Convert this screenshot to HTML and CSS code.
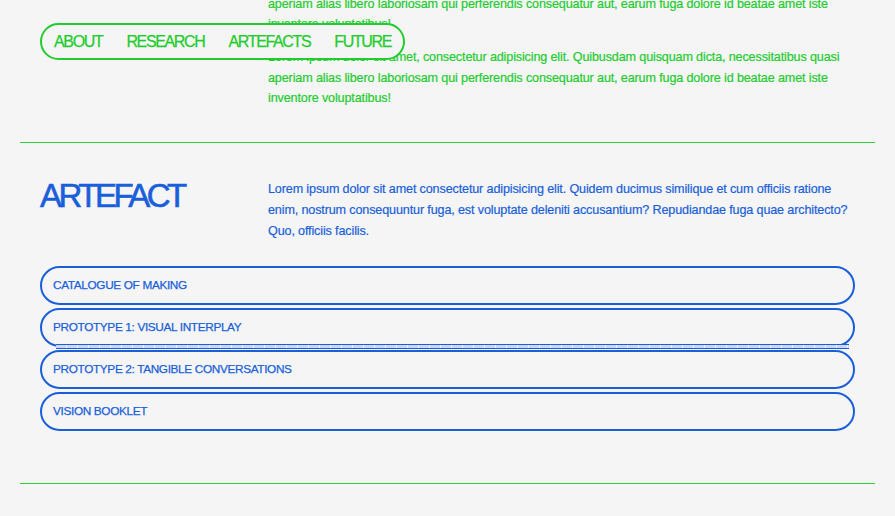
FILE: index.html
```html
<!DOCTYPE html>
<html lang="en">
<head>
<meta charset="utf-8">
<title>Artefact</title>
<link rel="stylesheet" href="styles.css">
</head>
<body>
<nav class="nav">
  <a class="nav-link" href="#about">ABOUT</a>
  <a class="nav-link" href="#research">RESEARCH</a>
  <a class="nav-link" href="#artefacts">ARTEFACTS</a>
  <a class="nav-link" href="#future">FUTURE</a>
</nav>
<main class="page">
  <section class="section section-intro">
    <div class="section-side"></div>
    <div class="section-body">
      <p class="text text-green">Lorem ipsum dolor sit amet, consectetur adipisicing elit. Quibusdam quisquam dicta, necessitatibus quasi aperiam alias libero laboriosam qui perferendis consequatur aut, earum fuga dolore id beatae amet iste inventore voluptatibus!</p>
      <p class="text text-green">Lorem ipsum dolor sit amet, consectetur adipisicing elit. Quibusdam quisquam dicta, necessitatibus quasi aperiam alias libero laboriosam qui perferendis consequatur aut, earum fuga dolore id beatae amet iste inventore voluptatibus!</p>
    </div>
  </section>
  <hr class="rule">
  <section class="section section-artefact" id="artefacts">
    <h2 class="heading">ARTEFACT</h2>
    <div class="section-body">
      <p class="text text-blue">Lorem ipsum dolor sit amet consectetur adipisicing elit. Quidem ducimus similique et cum officiis ratione enim, nostrum consequuntur fuga, est voluptate deleniti accusantium? Repudiandae fuga quae architecto? Quo, officiis facilis.</p>
    </div>
    <ul class="list">
      <li class="list-item">CATALOGUE OF MAKING</li>
      <li class="list-item list-item-seam">PROTOTYPE 1: VISUAL INTERPLAY</li>
      <li class="list-item">PROTOTYPE 2: TANGIBLE CONVERSATIONS</li>
      <li class="list-item">VISION BOOKLET</li>
    </ul>
  </section>
  <hr class="rule">
</main>
</body>
</html>
```
FILE: styles.css
```css
* { box-sizing: border-box; }

html, body {
  margin: 0;
  padding: 0;
  background: #f5f5f5;
  font-family: "Liberation Sans", Arial, sans-serif;
}

.nav {
  position: fixed;
  top: 23px;
  left: 40px;
  z-index: 10;
  display: flex;
  align-items: center;
  gap: 24px;
  height: 37px;
  padding: 0 12px 0 12px;
  border: 2px solid #22cc2e;
  border-radius: 20px;
  background: #f5f5f5;
}

.nav-link {
  color: #22cc2e;
  text-decoration: none;
  font-size: 16px;
  letter-spacing: -1.35px;
  line-height: 1;
  -webkit-text-stroke: 0.25px #22cc2e;
}

.page {
  padding: 0 20px;
}

.section {
  display: grid;
  grid-template-columns: 228px 1fr;
  padding: 0 20px;
}

.section-intro {
  margin-top: -27px;
  padding-bottom: 33px;
}

.section-artefact {
  padding-top: 36px;
  padding-bottom: 52px;
}

.section-body {
  min-width: 0;
}

.text {
  margin: 0 0 12.5px;
  font-size: 12.6px;
  line-height: 20.5px;
  letter-spacing: -0.14px;
  -webkit-text-stroke: 0.2px currentColor;
}

.text:last-child { margin-bottom: 0; }

.text-green { color: #22cc2e; }

.text-blue {
  color: #1a5fd9;
  line-height: 21px;
}

.heading {
  margin: 0;
  color: #1a5fd9;
  font-size: 33px;
  font-weight: 400;
  line-height: 1;
  letter-spacing: -3.5px;
  -webkit-text-stroke: 0.6px #1a5fd9;
}

.rule {
  margin: 0;
  height: 0;
  border: 0;
  border-top: 1.5px solid #2fcf3a;
}

.list {
  grid-column: 1 / -1;
  list-style: none;
  margin: 24px 0 0;
  padding: 0;
  display: flex;
  flex-direction: column;
  gap: 3px;
}

.list-item {
  position: relative;
  display: flex;
  align-items: center;
  height: 39px;
  padding: 0 11px;
  border: 2px solid #1a5fd9;
  border-radius: 20px;
  color: #1a5fd9;
  font-size: 11.8px;
  letter-spacing: -0.35px;
  -webkit-text-stroke: 0.25px #1a5fd9;
}

.list-item-seam::after {
  content: "";
  position: absolute;
  left: 14px;
  right: 4px;
  bottom: -4px;
  height: 3px;
  border-top: 1px solid #1a5fd9;
  border-bottom: 1px solid #1a5fd9;
  background: repeating-linear-gradient(90deg, #c9d7f4 0 10px, #f5f5f5 10px 11px);
}
```
